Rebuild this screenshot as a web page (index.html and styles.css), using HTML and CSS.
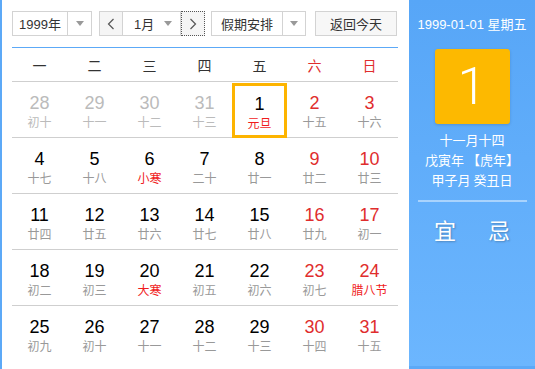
FILE: index.html
```html
<!DOCTYPE html>
<html lang="zh">
<head>
<meta charset="utf-8">
<link rel="stylesheet" href="styles.css">
</head>
<body>
<div class="widget">
  <div class="main">
    <div class="controls">
      <div class="sel sel-year"><span class="sel-text">1999年</span><span class="sel-arrow"><i class="tri"></i></span></div>
      <div class="month-group">
        <span class="nav-btn"><svg width="8" height="12" viewBox="0 0 8 12"><polyline points="6.5,1 1.5,6 6.5,11" fill="none" stroke="#555" stroke-width="1.2"/></svg></span>
        <span class="month-sel"><span class="sel-text">1月</span><i class="tri"></i></span>
        <span class="nav-btn nav-next"><svg width="8" height="12" viewBox="0 0 8 12"><polyline points="1.5,1 6.5,6 1.5,11" fill="none" stroke="#555" stroke-width="1.2"/></svg></span>
      </div>
      <div class="sel sel-holiday"><span class="sel-text">假期安排</span><span class="sel-arrow"><i class="tri"></i></span></div>
      <div class="today-btn">返回今天</div>
    </div>
    <div class="weekdays">
      <span>一</span><span>二</span><span>三</span><span>四</span><span>五</span><span class="red">六</span><span class="red">日</span>
    </div>
    <div class="grid">
      <div class="row">
        <div class="cell other"><b>28</b><i>初十</i></div>
        <div class="cell other"><b>29</b><i>十一</i></div>
        <div class="cell other"><b>30</b><i>十二</i></div>
        <div class="cell other"><b>31</b><i>十三</i></div>
        <div class="cell selected"><b>1</b><i class="fest">元旦</i></div>
        <div class="cell wk"><b>2</b><i>十五</i></div>
        <div class="cell wk"><b>3</b><i>十六</i></div>
      </div>
      <div class="row">
        <div class="cell"><b>4</b><i>十七</i></div>
        <div class="cell"><b>5</b><i>十八</i></div>
        <div class="cell"><b>6</b><i class="fest">小寒</i></div>
        <div class="cell"><b>7</b><i>二十</i></div>
        <div class="cell"><b>8</b><i>廿一</i></div>
        <div class="cell wk"><b>9</b><i>廿二</i></div>
        <div class="cell wk"><b>10</b><i>廿三</i></div>
      </div>
      <div class="row">
        <div class="cell"><b>11</b><i>廿四</i></div>
        <div class="cell"><b>12</b><i>廿五</i></div>
        <div class="cell"><b>13</b><i>廿六</i></div>
        <div class="cell"><b>14</b><i>廿七</i></div>
        <div class="cell"><b>15</b><i>廿八</i></div>
        <div class="cell wk"><b>16</b><i>廿九</i></div>
        <div class="cell wk"><b>17</b><i>初一</i></div>
      </div>
      <div class="row">
        <div class="cell"><b>18</b><i>初二</i></div>
        <div class="cell"><b>19</b><i>初三</i></div>
        <div class="cell"><b>20</b><i class="fest">大寒</i></div>
        <div class="cell"><b>21</b><i>初五</i></div>
        <div class="cell"><b>22</b><i>初六</i></div>
        <div class="cell wk"><b>23</b><i>初七</i></div>
        <div class="cell wk"><b>24</b><i class="fest">腊八节</i></div>
      </div>
      <div class="row">
        <div class="cell"><b>25</b><i>初九</i></div>
        <div class="cell"><b>26</b><i>初十</i></div>
        <div class="cell"><b>27</b><i>十一</i></div>
        <div class="cell"><b>28</b><i>十二</i></div>
        <div class="cell"><b>29</b><i>十三</i></div>
        <div class="cell wk"><b>30</b><i>十四</i></div>
        <div class="cell wk"><b>31</b><i>十五</i></div>
      </div>
    </div>
  </div>
  <div class="side">
    <div class="side-date">1999-01-01 星期五</div>
    <div class="big-day">1</div>
    <div class="lunar">
      <div>十一月十四</div>
      <div>戊寅年 【虎年】</div>
      <div>甲子月 癸丑日</div>
    </div>
    <div class="yiji"><span>宜</span><span>忌</span></div>
  </div>
</div>
</body>
</html>
```

FILE: styles.css
```css
html, body {
  margin: 0;
  padding: 0;
}
body {
  background: #5ca9f7;
  font-family: "Liberation Sans", Arial, "Noto Sans CJK SC", sans-serif;
  width: 535px;
  height: 369px;
  overflow: hidden;
}
.widget {
  display: flex;
  height: 366px;
  padding-left: 2px;
}
.main {
  width: 386px;
  height: 366px;
  background: #fff;
  padding: 11px 11px 0 10px;
}
.controls {
  display: flex;
  height: 25px;
  font-size: 13px;
  color: #333;
}
.sel {
  display: flex;
  border: 1px solid #d3d3d3;
  box-sizing: border-box;
  height: 25px;
  background: #fff;
}
.sel-text {
  display: flex;
  align-items: center;
  justify-content: center;
}
.sel-arrow {
  display: flex;
  align-items: center;
  justify-content: center;
  border-left: 1px solid #d3d3d3;
}
.tri {
  display: block;
  width: 0;
  height: 0;
  border-left: 4px solid transparent;
  border-right: 4px solid transparent;
  border-top: 5px solid #999;
}
.sel-year {
  width: 80px;
}
.sel-year .sel-text {
  width: 54px;
}
.sel-year .sel-arrow {
  flex: 1;
}
.month-group {
  display: flex;
  margin-left: 7px;
  height: 25px;
  border: 1px solid #d3d3d3;
  box-sizing: border-box;
  border-right: none;
}
.nav-btn {
  width: 22px;
  display: flex;
  align-items: center;
  justify-content: center;
  background: #f5f5f5;
  box-sizing: border-box;
}
.month-sel {
  width: 59px;
  display: flex;
  align-items: center;
  justify-content: space-between;
  padding: 0 8px 0 11px;
  box-sizing: border-box;
  border-left: 1px solid #d3d3d3;
  border-right: 1px solid #d3d3d3;
}
.nav-next {
  width: 24px;
  margin-top: -1px;
  height: 25px;
  border: 1px dotted #555;
}
.sel-holiday {
  width: 95px;
  margin-left: 6px;
}
.sel-holiday .sel-text {
  width: 70px;
}
.sel-holiday .sel-arrow {
  flex: 1;
}
.today-btn {
  margin-left: 9px;
  width: 82px;
  height: 25px;
  box-sizing: border-box;
  border: 1px solid #d3d3d3;
  background: #f7f7f7;
  display: flex;
  align-items: center;
  justify-content: center;
  color: #333;
}
.weekdays {
  margin-top: 11px;
  border-top: 1px solid #5ca9f7;
  display: grid;
  grid-template-columns: repeat(7, 55px);
  height: 33px;
  align-items: center;
  font-size: 14px;
  color: #333;
  font-family: "Noto Sans CJK SC", sans-serif;
}
.weekdays span {
  text-align: center;
}
.weekdays .red {
  color: #e02d2d;
}
.row {
  display: grid;
  grid-template-columns: repeat(7, 55px);
  border-top: 1px solid #cfcfcf;
  height: 55px;
}
.cell {
  display: flex;
  flex-direction: column;
  align-items: center;
  box-sizing: border-box;
  padding-top: 11px;
  height: 55px;
}
.cell b {
  font-weight: normal;
  font-size: 18px;
  line-height: 20px;
  color: #000;
}
.cell i {
  font-style: normal;
  font-size: 12px;
  line-height: 17px;
  color: #999;
  font-family: "Noto Sans CJK SC", sans-serif;
}
.cell.wk b {
  color: #e02d2d;
}
.cell.other b {
  color: #bbb;
}
.cell.other i {
  color: #bbb;
}
.cell i.fest {
  color: #f01c1c;
}
.cell.selected {
  border: 3px solid #fdb400;
  padding-top: 8px;
  margin-top: 1px;
  height: 55px;
}
.side {
  flex: 1;
  background: linear-gradient(#57a6f7, #6cb6fe);
  color: #fff;
  display: flex;
  flex-direction: column;
  align-items: center;
  font-family: "Noto Sans CJK SC", sans-serif;
}
.side-date {
  margin-top: 15px;
  font-size: 13px;
  line-height: 20px;
  font-family: "Liberation Sans", "Noto Sans CJK SC", sans-serif;
}
.big-day {
  margin-top: 14px;
  width: 75px;
  height: 75px;
  background: #fdb900;
  border-radius: 3px;
  box-shadow: 0 1px 3px rgba(0, 0, 0, 0.15);
  font-family: "Roboto", "Liberation Sans", sans-serif;
  font-weight: 300;
  font-size: 52px;
  line-height: 75px;
  text-align: center;
  color: #fff;
}
.lunar {
  margin-top: 6px;
  font-size: 13px;
  line-height: 20px;
  text-align: center;
  width: 109px;
  padding-bottom: 10px;
  border-bottom: 2px solid rgba(255, 255, 255, 0.45);
}
.yiji {
  display: flex;
  gap: 32px;
  margin-top: 14px;
  font-size: 22px;
  line-height: 26px;
  text-shadow: 1px 1px 2px rgba(0, 0, 0, 0.25);
}
```
